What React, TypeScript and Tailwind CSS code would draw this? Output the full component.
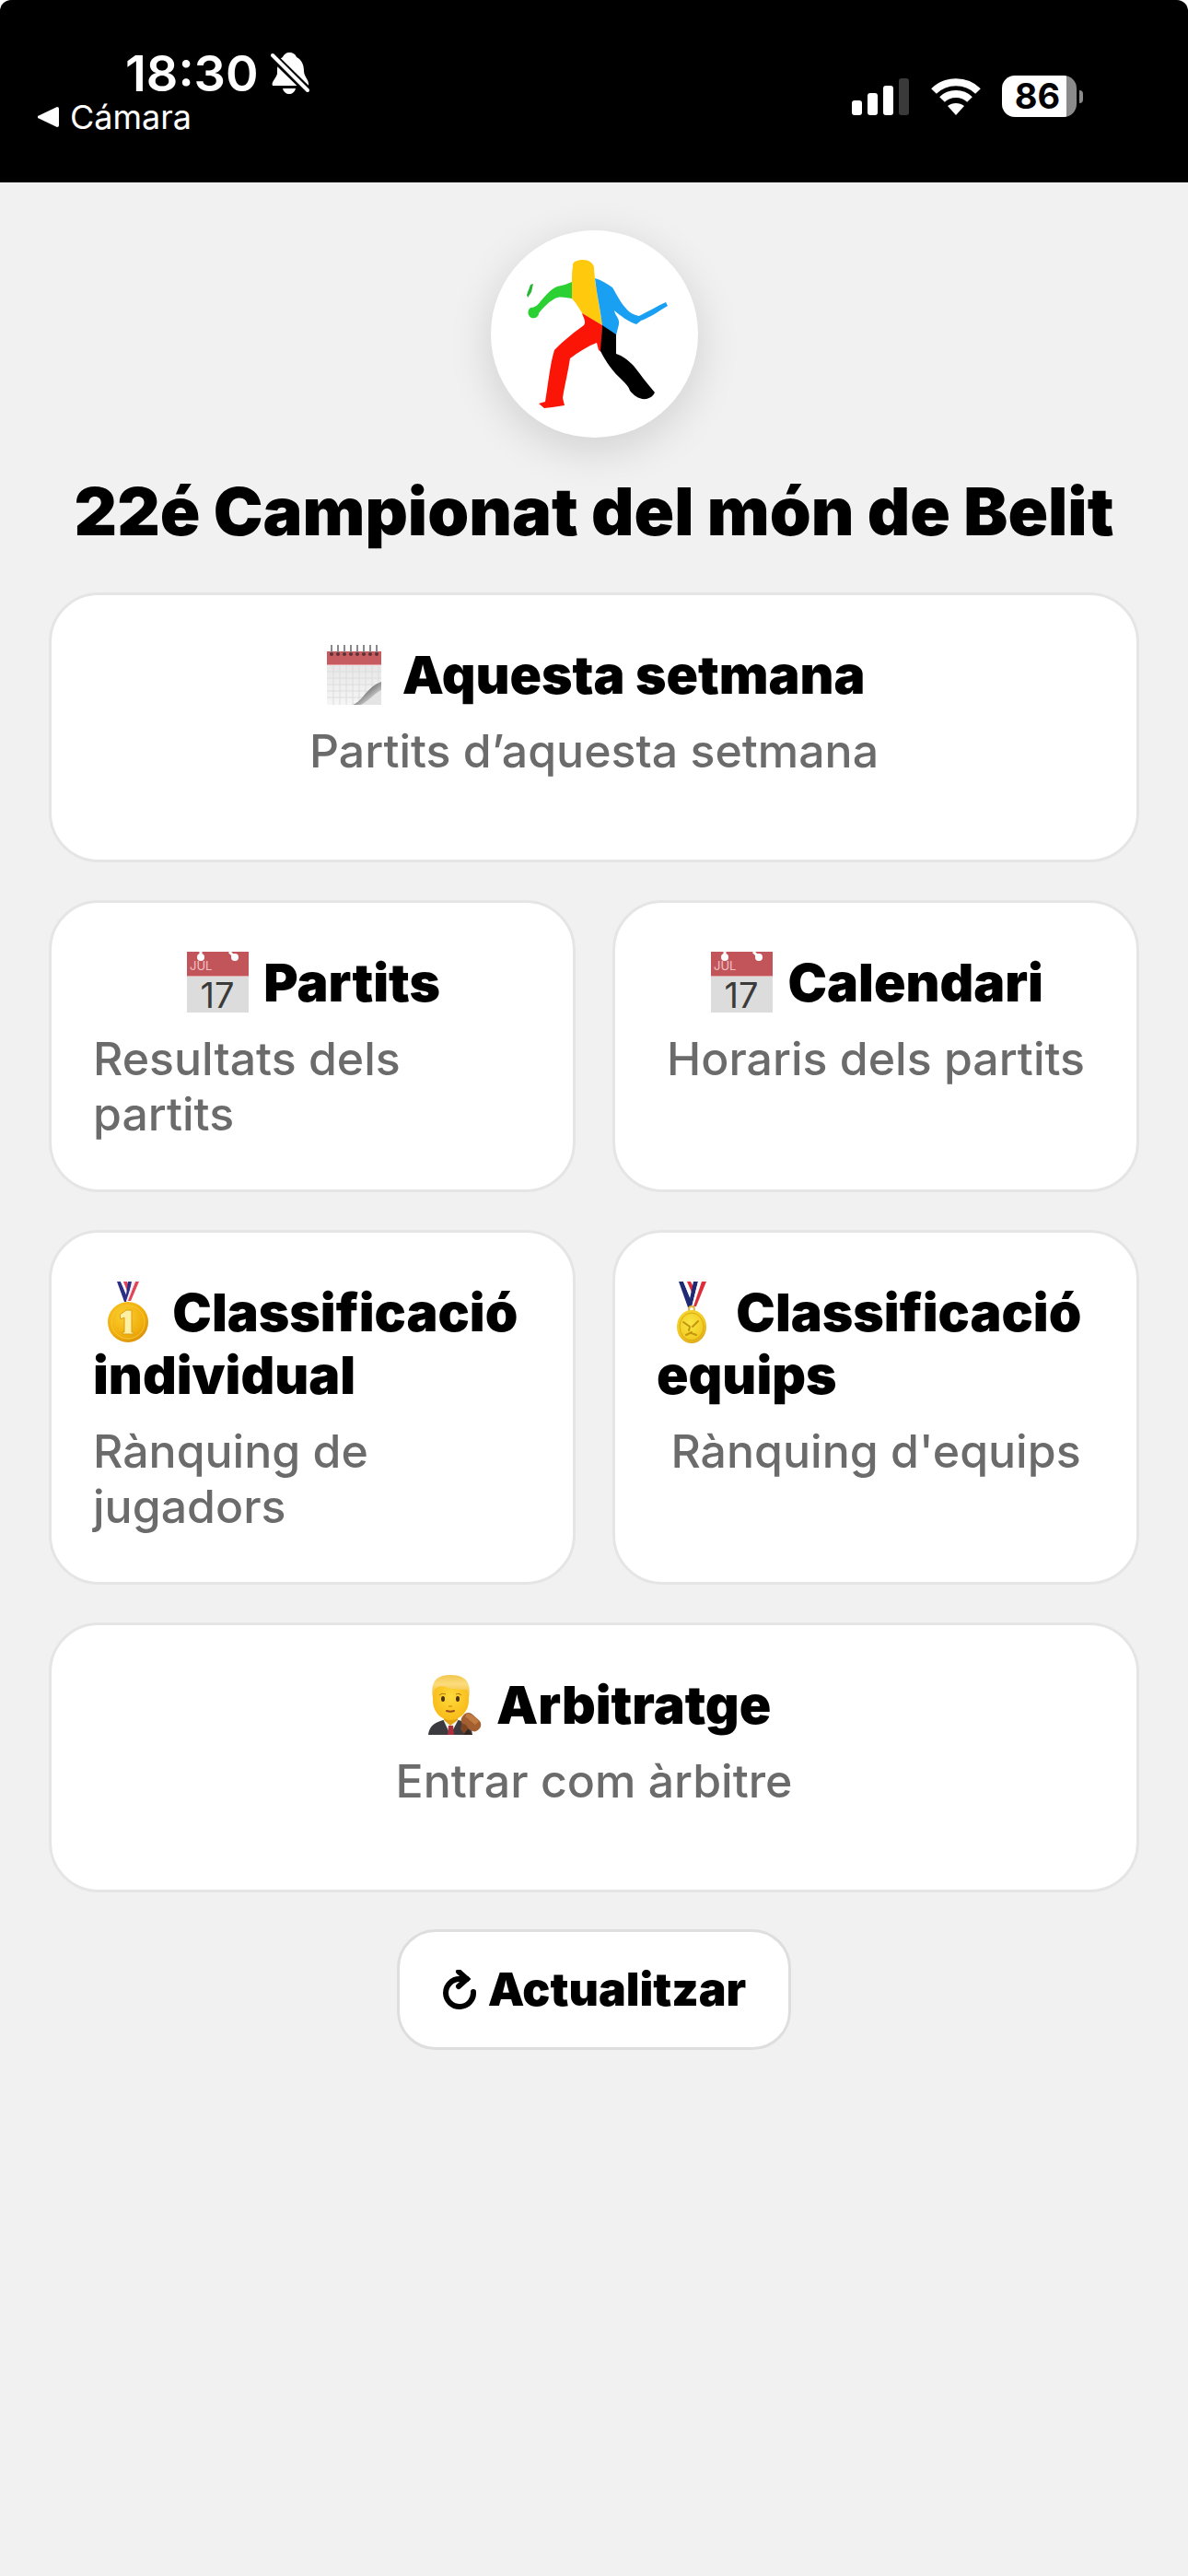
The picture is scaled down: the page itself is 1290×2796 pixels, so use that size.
import type { ReactNode } from "react";

type Tile = {
  id: string;
  icon: ReactNode;
  title: string;
  subtitle: string;
  wide?: boolean;
};

const emojiClass =
  "inline-block w-[75px] h-[68px] align-[-13px] overflow-visible";

function NotepadIcon() {
  const rings = [10, 17, 24, 31, 38, 45, 52, 59];
  return (
    <svg viewBox="0 0 75 68" className={emojiClass} aria-hidden="true">
      <defs>
        <linearGradient id="pad" x1="0" y1="0" x2="0" y2="1">
          <stop offset="0" stopColor="#e2e2e2" />
          <stop offset="1" stopColor="#f6f6f6" />
        </linearGradient>
        <linearGradient id="curl" x1="0" y1="0" x2="1" y2="1">
          <stop offset="0.3" stopColor="#555" />
          <stop offset="0.7" stopColor="#c8c8c8" />
        </linearGradient>
      </defs>
      <rect x="5" y="9" width="59" height="58" fill="url(#pad)" />
      <rect x="5" y="9" width="59" height="14" fill="#c65c60" />
      <path d="M5 23.500H64" stroke="#e99a9c" />
      <path
        d="M12 24V67M19 24V67M26 24V67M33 24V67M40 24V67M47 24V60M54 24V55M61 24V48M5 31H64M5 38H64M5 45H62M5 52H54M5 59H44"
        stroke="#dcdcdc"
        strokeWidth="1"
      />
      <path d="M33 67C44 63 49 47 64 42V67Z" fill="url(#curl)" />
      <path d="M42 67C52 62 56 55 64 51V67Z" fill="#e4e4e4" />
      {rings.map((x) => (
        <g key={x}>
          <path d={`M${x} 2V12`} stroke="#8a8a8a" strokeWidth="2" />
          <circle cx={x} cy="12" r="2" fill="#5d3034" />
        </g>
      ))}
    </svg>
  );
}

function CalendarIcon() {
  return (
    <svg viewBox="0 0 75 68" className={emojiClass} aria-hidden="true">
      <rect x="3" y="1" width="67" height="66" fill="#dcdcdc" />
      <rect x="3" y="1" width="67" height="26" fill="#c2555a" />
      <path d="M3 27.500H70" stroke="#e3a3a5" />
      <circle cx="18" cy="7" r="4" fill="#fff" />
      <path d="M18 7V1" stroke="#fff" strokeWidth="3" />
      <circle cx="55" cy="7" r="4" fill="#fff" />
      <path d="M55 7L49 1" stroke="#fff" strokeWidth="3" />
      <text
        x="6"
        y="21"
        fontSize="13"
        fontWeight="400"
        fill="#f0c4c5"
        fontFamily="Inter, sans-serif"
      >
        JUL
      </text>
      <text
        x="36"
        y="62"
        textAnchor="middle"
        fontSize="38"
        fontWeight="400"
        fill="#3a3a3a"
        fontFamily="Inter, sans-serif"
      >
        17
      </text>
    </svg>
  );
}

function FirstMedalIcon() {
  return (
    <svg viewBox="0 0 75 68" className={emojiClass} aria-hidden="true">
      <defs>
        <radialGradient id="gold" cx="0.4" cy="0.35" r="0.7">
          <stop offset="0" stopColor="#fbd02f" />
          <stop offset="0.7" stopColor="#f0ae0c" />
          <stop offset="1" stopColor="#d98f08" />
        </radialGradient>
      </defs>
      <path d="M26 1H30L38 18L36 23H34Z" fill="#2d2f86" />
      <path d="M30 1H33L39 15L37 18Z" fill="#fff" />
      <path d="M33 1H37L40 9L38 14Z" fill="#e04456" />
      <path d="M38 1H42L38 20L35 22Z" fill="#2d2f86" />
      <path d="M46 1H50L41 22H37Z" fill="#e04456" />
      <path d="M43 1H46L38 22H36Z" fill="#f2eef4" />
      <circle cx="38" cy="45" r="22" fill="url(#gold)" />
      <circle cx="38" cy="45" r="18" fill="none" stroke="#f7c935" strokeWidth="1" />
      <path d="M29 37L36 32H42V56H44V58H32V56H34V40L30 42Z" fill="#fdf0a2" stroke="#dc9a10" />
    </svg>
  );
}

function SportsMedalIcon() {
  return (
    <svg viewBox="0 0 75 68" className={emojiClass} aria-hidden="true">
      <defs>
        <radialGradient id="goldTeam" cx="0.45" cy="0.4" r="0.65">
          <stop offset="0" stopColor="#f9e545" />
          <stop offset="0.7" stopColor="#f3cd22" />
          <stop offset="1" stopColor="#d89c14" />
        </radialGradient>
      </defs>
      <path d="M24 1H29L37 20L36 29H34Z" fill="#1f2a75" />
      <path d="M29 1H33L39 16L37 21Z" fill="#fff" />
      <path d="M33 1H37L41 9L39 15Z" fill="#dc2f38" />
      <path d="M40 1H45L38 29H34Z" fill="#1f2a75" />
      <path d="M45 1H49L40 29H38Z" fill="#fff" />
      <path d="M49 1H54L43 28H40Z" fill="#dc2f38" />
      <circle cx="38" cy="31" r="3" fill="none" stroke="#e3b53c" strokeWidth="2" />
      <ellipse cx="38" cy="50" rx="16" ry="18" fill="url(#goldTeam)" />
      <ellipse cx="38" cy="50" rx="13" ry="15" fill="none" stroke="#d9a81c" />
      <path
        d="M29 45L36 50L35 54M39 50L45 44M38 57L43 59M32 59L38 56"
        fill="none"
        stroke="#c4960f"
        strokeWidth="2"
        strokeLinecap="round"
      />
    </svg>
  );
}

function JudgeIcon() {
  return (
    <svg viewBox="0 0 75 68" className={emojiClass} aria-hidden="true">
      <defs>
        <linearGradient id="hair" x1="0" y1="0" x2="0" y2="1">
          <stop offset="0" stopColor="#f3c64e" />
          <stop offset="0.4" stopColor="#fbdc7c" />
          <stop offset="1" stopColor="#f0b429" />
        </linearGradient>
        <radialGradient id="face" cx="0.5" cy="0.45" r="0.6">
          <stop offset="0" stopColor="#fed93a" />
          <stop offset="1" stopColor="#f8b916" />
        </radialGradient>
      </defs>
      <path d="M12 67C13 58 18 54 28 51H45C54 53 59 58 60 67Z" fill="#3b3b3f" />
      <path d="M28 50L36 67L45 50Z" fill="#f4f4f4" />
      <path d="M34 57H39L40 67H33Z" fill="#a92f3c" />
      <path d="M29 44H44V51L36 57L29 51Z" fill="#e2a312" />
      <path
        d="M17 24C17 8 26 5 36 5S56 8 56 24V30C56 41 47 51 36 51S17 41 17 30Z"
        fill="url(#face)"
      />
      <path
        d="M17 27C14 10 20 2 36 2C53 2 59 10 56 27L54 18C47 18 38 18 31 15C26 13 21 15 19 18Z"
        fill="url(#hair)"
      />
      <ellipse cx="28" cy="28" rx="2" ry="3" fill="#4b3015" />
      <ellipse cx="44" cy="28" rx="2" ry="3" fill="#4b3015" />
      <path
        d="M24 24C26 22 29 22 31 23M42 23C44 22 46 22 48 24"
        fill="none"
        stroke="#a8740f"
        strokeWidth="1"
      />
      <path d="M32 41C35 42 37 42 40 41" fill="none" stroke="#9b4a1a" strokeWidth="2" strokeLinecap="round" />
      <path d="M34 36H38" stroke="#e5a41a" strokeWidth="2" />
      <path
        d="M50 46C52 43 56 42 59 44L67 51C70 54 70 58 67 61C64 64 61 64 58 62L49 55C47 53 47 49 50 46Z"
        fill="#a45f30"
      />
      <path d="M54 44C58 43 64 49 67 52L63 56L52 47Z" fill="#c07b43" />
      <path d="M48 55C52 54 56 58 55 63L51 66L47 61Z" fill="#7d4521" />
      <path d="M50 67L55 61L60 67Z" fill="#33261f" />
    </svg>
  );
}

function BelitLogo() {
  return (
    <svg viewBox="0 0 270 260" className="w-[270px] h-[260px] shrink-0" aria-hidden="true">
      <path d="M66 76L69 75L67 84L63 90L62 87Z" fill="#27b534" />
      <path
        d="M111 73V91C103 90 97 88 91 92C84 96 79 102 75 107C75 111 71 113 67 112C63 110 62 104 66 101C71 101 74 98 77 94C83 87 88 81 95 78C101 77 106 75 111 73Z"
        fill="#2bd033"
      />
      <path
        d="M112 56C111 51 117 49 123 49C129 49 134 52 135 57C135 62 136 67 136 71L144 120L123 108C118 101 116 96 111 91V72C111 67 111 61 112 56Z"
        fill="#ffc90e"
      />
      <path
        d="M136 69C143 71 149 75 155 79C160 87 164 96 170 102C174 107 179 109 184 110C194 105 204 99 213 95L215 99C205 105 195 112 186 115L181 119C172 116 164 110 157 104C158 110 163 112 162 119L159 131L144 121C142 103 138 87 136 69Z"
        fill="#1aa0f2"
      />
      <path
        d="M122 107L144 120L143 149L140 147L138 139C128 143 118 149 109 156C107 170 103 186 101 199L103 207L90 209L81 210L75 205L82 203C85 186 87 163 92 147C101 137 117 125 124 120C127 116 123 111 122 107Z"
        fill="#fb1507"
      />
      <path
        d="M144 120L159 130V151C166 153 172 158 178 164C186 174 193 184 201 193C199 197 196 199 192 200C184 201 178 196 174 191C173 187 169 183 165 179C156 171 148 160 142 148Z"
        fill="#000"
      />
    </svg>
  );
}

function SilentIcon() {
  return (
    <svg viewBox="0 0 44 48" className="w-11 h-12" aria-hidden="true">
      <path
        d="M21 1C25 1 28 3 29 6C35 9 37 15 37 21C37 27 42 30 42 35V37H3C1 33 7 29 8 24C8 17 8 9 14 6C15 3 18 1 21 1Z"
        fill="#fff"
      />
      <path d="M14 40H28C27 44 24 46 21 46S15 44 14 40Z" fill="#fff" />
      <path d="M2 4L41 42" stroke="#000" strokeWidth="9" />
      <path d="M3 4L41 42" stroke="#fff" strokeWidth="4" strokeLinecap="round" />
    </svg>
  );
}

function SignalIcon() {
  return (
    <svg viewBox="0 0 63 42" className="w-[63px] h-[42px]" aria-hidden="true">
      <rect x="0" y="25" width="11" height="16" rx="3" fill="#fff" />
      <rect x="17" y="17" width="11" height="24" rx="3" fill="#fff" />
      <rect x="34" y="9" width="11" height="32" rx="3" fill="#fff" />
      <rect x="51" y="1" width="11" height="40" rx="3" fill="#3a3a3a" />
    </svg>
  );
}

function WifiIcon() {
  return (
    <svg viewBox="0 0 54 42" className="w-[54px] h-[42px]" fill="none" stroke="#fff" aria-hidden="true">
      <path d="M3 15C16 2 38 2 51 15" strokeWidth="8" />
      <path d="M12 24C20 16 34 16 42 24" strokeWidth="8" />
      <path d="M18 31C23 27 31 27 36 31L27 41Z" fill="#fff" stroke="none" />
    </svg>
  );
}

const tiles: Tile[] = [
  {
    id: "week",
    icon: <NotepadIcon />,
    title: "Aquesta setmana",
    subtitle: "Partits d’aquesta setmana",
    wide: true,
  },
  {
    id: "matches",
    icon: <CalendarIcon />,
    title: "Partits",
    subtitle: "Resultats dels partits",
  },
  {
    id: "calendar",
    icon: <CalendarIcon />,
    title: "Calendari",
    subtitle: "Horaris dels partits",
  },
  {
    id: "players",
    icon: <FirstMedalIcon />,
    title: "Classificació individual",
    subtitle: "Rànquing de jugadors",
  },
  {
    id: "teams",
    icon: <SportsMedalIcon />,
    title: "Classificació equips",
    subtitle: "Rànquing d'equips",
  },
  {
    id: "referee",
    icon: <JudgeIcon />,
    title: "Arbitratge",
    subtitle: "Entrar com àrbitre",
    wide: true,
  },
];

function StatusBar() {
  return (
    <div className="bg-white">
      <div className="flex h-[198px] items-start justify-between rounded-t-xl bg-black pl-10 pr-[114px] text-white">
        <div className="pt-12">
          <div className="flex items-center gap-3 pl-[96px]">
            <span className="text-[54px] leading-[64px] font-semibold">18:30</span>
            <SilentIcon />
          </div>
          <a href="#" className="flex items-center gap-3 text-[36px] leading-[30px]">
            <svg viewBox="0 0 24 24" className="size-6" aria-hidden="true">
              <path d="M1 11L22 1Q24 1 24 3V21Q24 23 22 23L1 13Z" fill="#fff" />
            </svg>
            Cámara
          </a>
        </div>
        <div className="flex items-center gap-[23px] pt-[82px]">
          <SignalIcon />
          <WifiIcon />
          <div className="flex items-center gap-[3px]">
            <div className="flex h-[45px] w-[81px] items-center justify-center rounded-[14px] bg-linear-to-r from-white from-86% to-[#8a8a8a] to-86% pr-1 text-[38px] font-bold text-black">
              86
            </div>
            <div className="h-[14px] w-1 rounded-r-full bg-[#8a8a8a]" />
          </div>
        </div>
      </div>
    </div>
  );
}

function TileCard({ tile }: { tile: Tile }) {
  return (
    <a
      href={`#${tile.id}`}
      className={`flex min-h-[293px] flex-col items-center gap-[18px] rounded-[54px] border-[3px] border-[#e5e5e5] bg-white px-[45px] py-[52px] ${
        tile.wide ? "col-span-2" : ""
      }`}
    >
      <h2 className="text-[57px] leading-[68px] font-black">
        {tile.icon} {tile.title}
      </h2>
      <p className="text-[50px] leading-[60px] font-medium text-[#6b6b6b]">
        {tile.subtitle}
      </p>
    </a>
  );
}

export default function App() {
  return (
    <div className="flex min-h-screen flex-col bg-[#f1f1f1] font-['Inter',sans-serif] text-black">
      <StatusBar />
      <main className="flex flex-col items-center px-[53px] pt-[52px]">
        <div className="flex size-[225px] items-center justify-center overflow-hidden rounded-full bg-white shadow-[0_12px_48px_rgba(0,0,0,0.14)]">
          <BelitLogo />
        </div>
        <h1 className="mt-9 text-center text-[72px] leading-[88px] font-black whitespace-nowrap">
          22é Campionat del món de Belit
        </h1>
        <div className="mt-11 grid w-full grid-cols-2 gap-x-10 gap-y-[41px]">
          {tiles.map((tile) => (
            <TileCard key={tile.id} tile={tile} />
          ))}
        </div>
        <button
          type="button"
          className="mt-10 flex h-[131px] items-center gap-3 rounded-[42px] border-[3px] border-[#dedede] bg-white px-[46px] text-[50px] font-black"
        >
          <svg viewBox="0 0 38 44" className="h-11 w-[38px]" fill="none" stroke="#000" strokeWidth="6" aria-hidden="true">
            <path d="M34 24A15 15 0 1 1 19 10H27" strokeLinecap="round" />
            <path d="M18 2L27 10L18 18" strokeLinecap="round" />
          </svg>
          Actualitzar
        </button>
      </main>
    </div>
  );
}
